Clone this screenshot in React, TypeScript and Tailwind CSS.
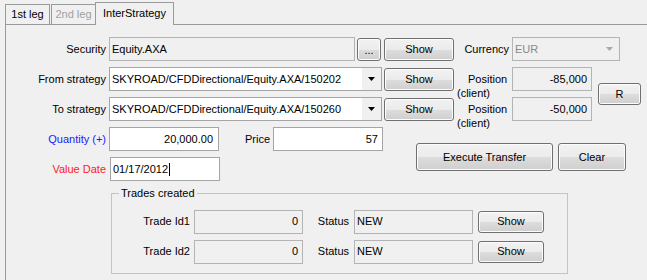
import React from "react"

const btn =
  "flex items-center justify-center rounded-[3px] border border-[#707070] bg-[linear-gradient(#f2f2f2_0%,#ebebeb_50%,#dddddd_50%,#cfcfcf_100%)] shadow-[inset_0_0_0_1px_#fcfcfc]"

function Btn({ className, children }: { className: string; children: React.ReactNode }) {
  return <div className={`${btn} ${className}`}>{children}</div>
}

function Arrow({ color }: { color: string }) {
  return (
    <svg width="7" height="4" viewBox="0 0 7 4">
      <path d="M0 0h7L3.5 4z" fill={color} />
    </svg>
  )
}

function Combo({ text, className }: { text: string; className: string }) {
  return (
    <div className={`flex h-[24px] border border-[#a5a5a5] bg-white ${className}`}>
      <div className="flex flex-1 items-center pl-[2px] whitespace-nowrap overflow-hidden">{text}</div>
      <div className="flex w-[19px] items-center justify-center bg-[#f0f0f0]">
        <Arrow color="#000" />
      </div>
    </div>
  )
}

function PositionLabel() {
  return (
    <div className="ml-[3px] w-[52px] self-start mt-[5px] leading-[14px]">
      <div className="pl-[11px]">Position</div>
      <div>(client)</div>
    </div>
  )
}

function Field({ text, className, disabled }: { text: string; className: string; disabled?: boolean }) {
  return (
    <div
      className={`flex items-center border ${
        disabled ? "border-[#b4b4b4] bg-[#f0f0f0]" : "border-[#a5a5a5] bg-white"
      } ${className}`}
    >
      {text}
    </div>
  )
}

export default function App() {
  return (
    <div className="w-[647px] h-[280px] overflow-hidden bg-[#f0f0f0] font-['Liberation_Sans',Arial,sans-serif] text-[11px] text-black">
      {/* Tabs */}
      <div className="relative z-10 flex h-[24px] items-end pl-[5px]">
        <div className="flex h-[20px] w-[45px] items-center justify-center border border-b-0 border-[#9a9a9a] bg-[#f0f0f0]">
          1st leg
        </div>
        <div className="ml-px flex h-[20px] w-[45px] items-center justify-center border border-b-0 border-[#9a9a9a] bg-[#f0f0f0] text-[#a0a0a0]">
          2nd leg
        </div>
        <div className="-ml-px -mb-px flex h-[23px] w-[79px] items-center justify-center border border-b-0 border-[#9a9a9a] bg-[#f0f0f0] pb-[2px]">
          InterStrategy
        </div>
      </div>

      {/* Panel */}
      <div className="ml-[5px] h-[260px] w-[700px] border-l border-t border-[#9a9a9a] pt-[12px]">
        {/* Security */}
        <div className="flex h-[24px] items-center">
          <div className="w-[100px] text-right">Security</div>
          <Field disabled text="Equity.AXA" className="ml-[3px] h-[24px] w-[246px] pl-[2px]" />
          <Btn className="ml-[2px] h-[23px] w-[24px] pt-[3px]">...</Btn>
          <Btn className="ml-[3px] h-[23px] w-[70px]">Show</Btn>
          <div className="w-[55px] text-right">Currency</div>
          <div className="ml-[3px] flex h-[24px] w-[108px] border border-[#b4b4b4] bg-[#f0f0f0] text-[#8a8a8a]">
            <div className="flex flex-1 items-center pl-[2px]">EUR</div>
            <div className="flex w-[19px] items-center justify-center">
              <Arrow color="#a8a8a8" />
            </div>
          </div>
        </div>

        {/* Strategies */}
        <div className="mt-[6px] flex items-center">
          <div className="flex flex-col gap-[6px]">
            <div className="flex h-[24px] items-center">
              <div className="w-[100px] text-right">From strategy</div>
              <Combo text="SKYROAD/CFDDirectional/Equity.AXA/150202" className="ml-[3px] w-[273px]" />
              <Btn className="ml-[2px] h-[23px] w-[70px]">Show</Btn>
              <PositionLabel />
              <Field disabled text="-85,000" className="ml-[3px] h-[24px] w-[80px] justify-end pr-[4px]" />
            </div>
            <div className="flex h-[24px] items-center">
              <div className="w-[100px] text-right">To strategy</div>
              <Combo text="SKYROAD/CFDDirectional/Equity.AXA/150260" className="ml-[3px] w-[273px]" />
              <Btn className="ml-[2px] h-[23px] w-[70px]">Show</Btn>
              <PositionLabel />
              <Field disabled text="-50,000" className="ml-[3px] h-[24px] w-[80px] justify-end pr-[4px]" />
            </div>
          </div>
          <Btn className="ml-[6px] h-[22px] w-[43px]">R</Btn>
        </div>

        {/* Quantity / Value date */}
        <div className="mt-[6px] flex">
          <div className="flex flex-col gap-[6px]">
            <div className="flex h-[24px] items-center">
              <div className="w-[100px] text-right text-[#1a1aff]">Quantity (+)</div>
              <Field text="20,000.00" className="ml-[3px] h-[24px] w-[110px] justify-end pr-[5px]" />
              <div className="w-[51px] text-right">Price</div>
              <Field text="57" className="ml-[3px] h-[24px] w-[110px] justify-end pr-[4px]" />
            </div>
            <div className="flex h-[24px] items-center">
              <div className="w-[100px] text-right text-[#ff1a1a]">Value Date</div>
              <div className="ml-[4px] flex h-[24px] w-[110px] items-center border border-[#a5a5a5] bg-white pl-[2px]">
                01/17/2012
                <span className="ml-px h-[13px] w-px bg-black" />
              </div>
            </div>
          </div>
          <div className="ml-[33px] mt-[16px] flex h-[28px] gap-[5px]">
            <Btn className="h-[28px] w-[137px]">Execute Transfer</Btn>
            <Btn className="h-[28px] w-[68px]">Clear</Btn>
          </div>
        </div>

        {/* Trades created */}
        <fieldset className="ml-[105px] mt-[4px] w-[457px] border border-[#c4c4c4] pb-[9px]">
          <legend className="ml-[7px] px-[2px]">Trades created</legend>
          <div className="mt-[8px] flex flex-col gap-[6px]">
            {["Trade Id1", "Trade Id2"].map((t) => (
              <div key={t} className="flex h-[24px] items-center">
                <div className="w-[78px] text-right">{t}</div>
                <Field disabled text="0" className="ml-[4px] h-[24px] w-[109px] justify-end pr-[4px]" />
                <div className="w-[46px] text-right">Status</div>
                <Field disabled text="NEW" className="ml-[5px] h-[24px] w-[119px] pl-[2px]" />
                <Btn className="ml-[5px] h-[22px] w-[66px]">Show</Btn>
              </div>
            ))}
          </div>
        </fieldset>
      </div>
    </div>
  )
}
